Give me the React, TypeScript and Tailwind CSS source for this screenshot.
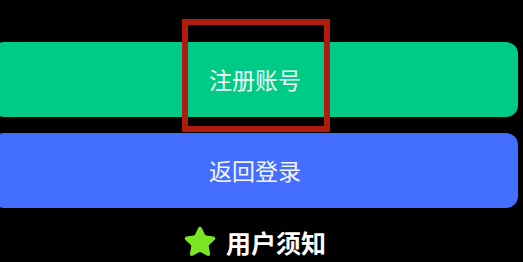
import { Star } from "lucide-react";

export default function App() {
  return (
    <div
      className="relative h-[262px] w-[523px] overflow-hidden bg-black"
      style={{ fontFamily: '"Noto Sans CJK SC", "Noto Sans", sans-serif' }}
    >
      <div className="ml-[-8px] flex w-[526px] flex-col gap-[16px] pt-[42px]">
        <button className="flex h-[75px] w-full items-center justify-center rounded-[12px] bg-[#00cb86] text-[23px] text-[#effff8]">
          注册账号
        </button>
        <button className="flex h-[75px] w-full items-center justify-center rounded-[12px] bg-[#436eff] text-[23px] text-[#f4f6ff]">
          返回登录
        </button>
      </div>
      <div className="mt-[17px] flex items-center justify-center gap-[9px] pr-[14px]">
        <Star className="h-[34px] w-[34px] fill-[#7be622] text-[#7be622]" strokeWidth={1.5} />
        <span className="text-[25px] font-semibold leading-none text-white">用户须知</span>
      </div>
      <div className="absolute left-[182px] top-[19px] h-[113px] w-[148px] border-[6px] border-[#b11c10]" />
    </div>
  );
}
